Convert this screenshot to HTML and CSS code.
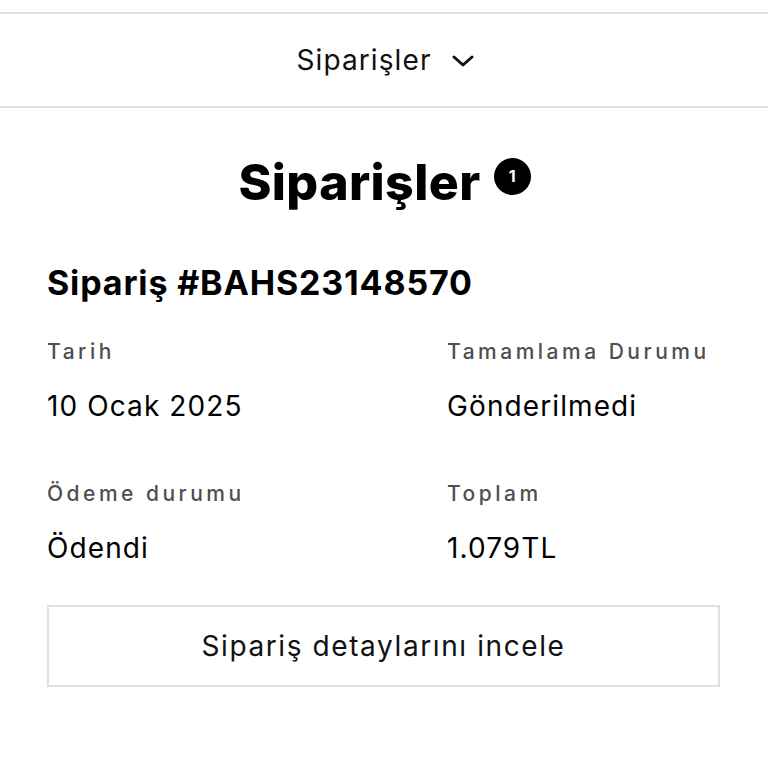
FILE: index.html
```html
<!DOCTYPE html>
<html lang="tr">
<head>
<meta charset="utf-8">
<link rel="stylesheet" href="styles.css">
</head>
<body>
<div class="top-gap"></div>
<header class="nav">
  <span class="nav-title">Siparişler</span>
  <svg class="chevron" width="22" height="12" viewBox="0 0 22 12"><path d="M2 2 L11 10 L20 2" fill="none" stroke="#111" stroke-width="3" stroke-linecap="round" stroke-linejoin="round"/></svg>
</header>
<main class="content">
  <h1 class="page-title"><span>Siparişler</span><span class="badge">1</span></h1>
  <h2 class="order-id">Sipariş #BAHS23148570</h2>
  <div class="info-grid">
    <div class="field">
      <div class="label">Tarih</div>
      <div class="value">10 Ocak 2025</div>
    </div>
    <div class="field">
      <div class="label">Tamamlama Durumu</div>
      <div class="value">Gönderilmedi</div>
    </div>
    <div class="field">
      <div class="label">Ödeme durumu</div>
      <div class="value">Ödendi</div>
    </div>
    <div class="field">
      <div class="label">Toplam</div>
      <div class="value">1.079TL</div>
    </div>
  </div>
  <button class="details-btn">Sipariş detaylarını incele</button>
</main>
</body>
</html>
```
FILE: styles.css
```css
html, body {
  margin: 0;
  padding: 0;
  background: #fff;
  color: #000;
  font-family: Inter, "Noto Sans", sans-serif;
}
.top-gap {
  height: 12px;
}
.nav {
  height: 92px;
  border-top: 2px solid #e0e0e0;
  border-bottom: 2px solid #e0e0e0;
  display: flex;
  align-items: center;
  justify-content: center;
  gap: 20px;
}
.nav-title {
  font-size: 28px;
  font-weight: 400;
  letter-spacing: 1.1px;
  color: #111;
  padding-left: 2px;
}
.chevron {
  margin-top: 2px;
}
.content {
  padding: 0 48px 0 47px;
}
.page-title {
  margin: 44px 0 0;
  display: flex;
  justify-content: center;
  align-items: flex-start;
  gap: 13px;
  font-size: 50px;
  font-weight: 800;
  line-height: 60px;
  letter-spacing: 0.4px;
}
.badge {
  width: 37px;
  height: 37px;
  border-radius: 50%;
  background: #000;
  color: #fff;
  font-size: 16px;
  font-weight: 700;
  letter-spacing: 0;
  line-height: 37px;
  text-align: center;
  margin-top: 6px;
}
.page-title span:first-child {
  margin-left: 2px;
}
.order-id {
  margin: 49px 0 0;
  font-size: 34px;
  font-weight: 700;
  letter-spacing: 0.85px;
  line-height: 44px;
}
.info-grid {
  display: grid;
  grid-template-columns: 400px 1fr;
  row-gap: 59px;
  margin-top: 35px;
}
.label {
  font-size: 21px;
  font-weight: 500;
  color: #4f4f4f;
  letter-spacing: 3.5px;
  line-height: 24px;
}
.value {
  font-size: 28px;
  font-weight: 400;
  letter-spacing: 1.1px;
  line-height: 34px;
  margin-top: 25px;
  color: #000;
}
.details-btn {
  display: block;
  width: 100%;
  height: 82px;
  margin-top: 40px;
  background: #fff;
  border: 2px solid #e0e0e0;
  font-family: Inter, "Noto Sans", sans-serif;
  font-size: 28px;
  letter-spacing: 1.6px;
  color: #111;
  cursor: pointer;
}
```
